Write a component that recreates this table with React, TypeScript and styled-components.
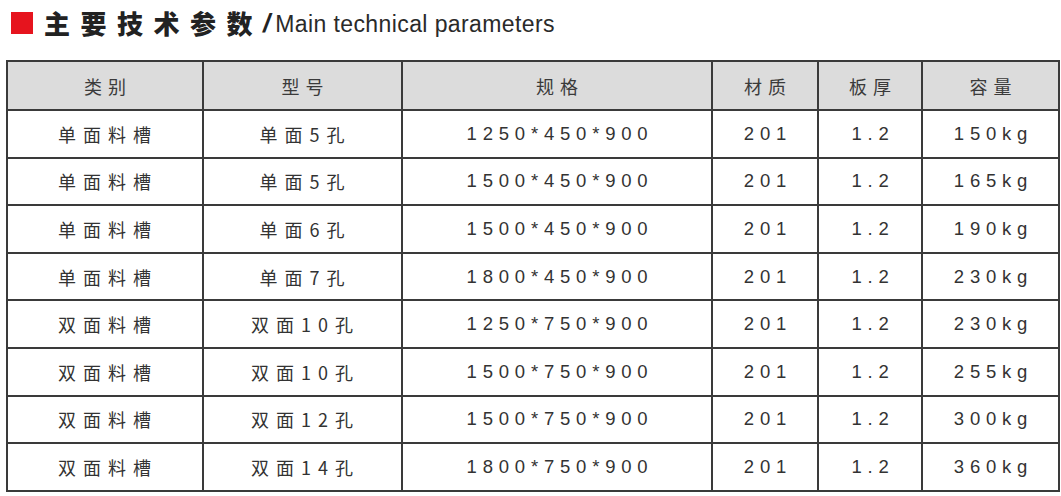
import React from "react";
import styled, { createGlobalStyle } from "styled-components";

const Global = createGlobalStyle`
  html, body { margin: 0; padding: 0; background: #ffffff; }
  body { font-family: "Liberation Sans", "Noto Sans CJK SC", sans-serif; color: #333; }
`;

const Page = styled.div`
  width: 1061px;
  height: 496px;
  overflow: hidden;
  padding: 8px 0 0 6px;
  box-sizing: border-box;
`;

const TitleBar = styled.div`
  display: flex;
  align-items: center;
  height: 30px;
  margin-left: 5px;
`;

const RedSquare = styled.div`
  width: 22px;
  height: 22px;
  background: #e6141e;
  margin-right: 11px;
`;

const TitleCn = styled.span`
  font-family: "Noto Sans CJK SC", sans-serif;
  font-weight: 900;
  font-size: 26px;
  letter-spacing: 10.5px;
  color: #222;
  line-height: 1;
`;

const Slash = styled.span`
  font-family: "Liberation Sans", sans-serif;
  font-weight: 700;
  font-style: italic;
  font-size: 26px;
  color: #222;
  margin: 0 5px 0 0;
  line-height: 1;
`;

const TitleEn = styled.span`
  font-family: "Liberation Sans", sans-serif;
  font-size: 23px;
  letter-spacing: 0.4px;
  color: #2a2a2a;
  line-height: 1;
  padding-top: 3px;
`;

const Table = styled.table`
  margin-top: 22px;
  border-collapse: collapse;
  table-layout: fixed;
  width: 1053px;
  border: 2px solid #3a3a3a;
`;

const HeadCell = styled.th`
  background: #dcdcdc;
  height: 47px;
  border: 2px solid #3a3a3a;
  font-family: "Noto Sans CJK SC", sans-serif;
  font-weight: 400;
  font-size: 18px;
  letter-spacing: 6px;
  color: #3a3a3a;
  text-align: center;
  padding: 0 0 0 6px;
`;

const Cell = styled.td<{ $cjk?: boolean }>`
  height: 45.6px;
  border: 2px solid #3a3a3a;
  font-family: ${(p) =>
    p.$cjk ? `"Noto Sans CJK SC", sans-serif` : `"Liberation Sans", "Noto Sans CJK SC", sans-serif`};
  font-size: ${(p) => (p.$cjk ? "18px" : "18.5px")};
  letter-spacing: ${(p) => (p.$cjk ? "7px" : "5.8px")};
  color: #333;
  text-align: center;
  padding: 0 0 0 6px;
  background: #fff;
`;

const cols = [196, 199, 310, 106, 104, 137];
const headers = ["类别", "型号", "规格", "材质", "板厚", "容量"];

const rows: string[][] = [
  ["单面料槽", "单面5孔", "1250*450*900", "201", "1.2", "150kg"],
  ["单面料槽", "单面5孔", "1500*450*900", "201", "1.2", "165kg"],
  ["单面料槽", "单面6孔", "1500*450*900", "201", "1.2", "190kg"],
  ["单面料槽", "单面7孔", "1800*450*900", "201", "1.2", "230kg"],
  ["双面料槽", "双面10孔", "1250*750*900", "201", "1.2", "230kg"],
  ["双面料槽", "双面10孔", "1500*750*900", "201", "1.2", "255kg"],
  ["双面料槽", "双面12孔", "1500*750*900", "201", "1.2", "300kg"],
  ["双面料槽", "双面14孔", "1800*750*900", "201", "1.2", "360kg"],
];

export default function App() {
  return (
    <Page>
      <Global />
      <TitleBar>
        <RedSquare />
        <TitleCn>主要技术参数</TitleCn>
        <Slash>/</Slash>
        <TitleEn>Main technical parameters</TitleEn>
      </TitleBar>
      <Table>
        <colgroup>
          {cols.map((w, i) => (
            <col key={i} style={{ width: w }} />
          ))}
        </colgroup>
        <thead>
          <tr>
            {headers.map((h) => (
              <HeadCell key={h}>{h}</HeadCell>
            ))}
          </tr>
        </thead>
        <tbody>
          {rows.map((r, i) => (
            <tr key={i}>
              {r.map((c, j) => (
                <Cell key={j} $cjk={j < 2}>
                  {c}
                </Cell>
              ))}
            </tr>
          ))}
        </tbody>
      </Table>
    </Page>
  );
}
